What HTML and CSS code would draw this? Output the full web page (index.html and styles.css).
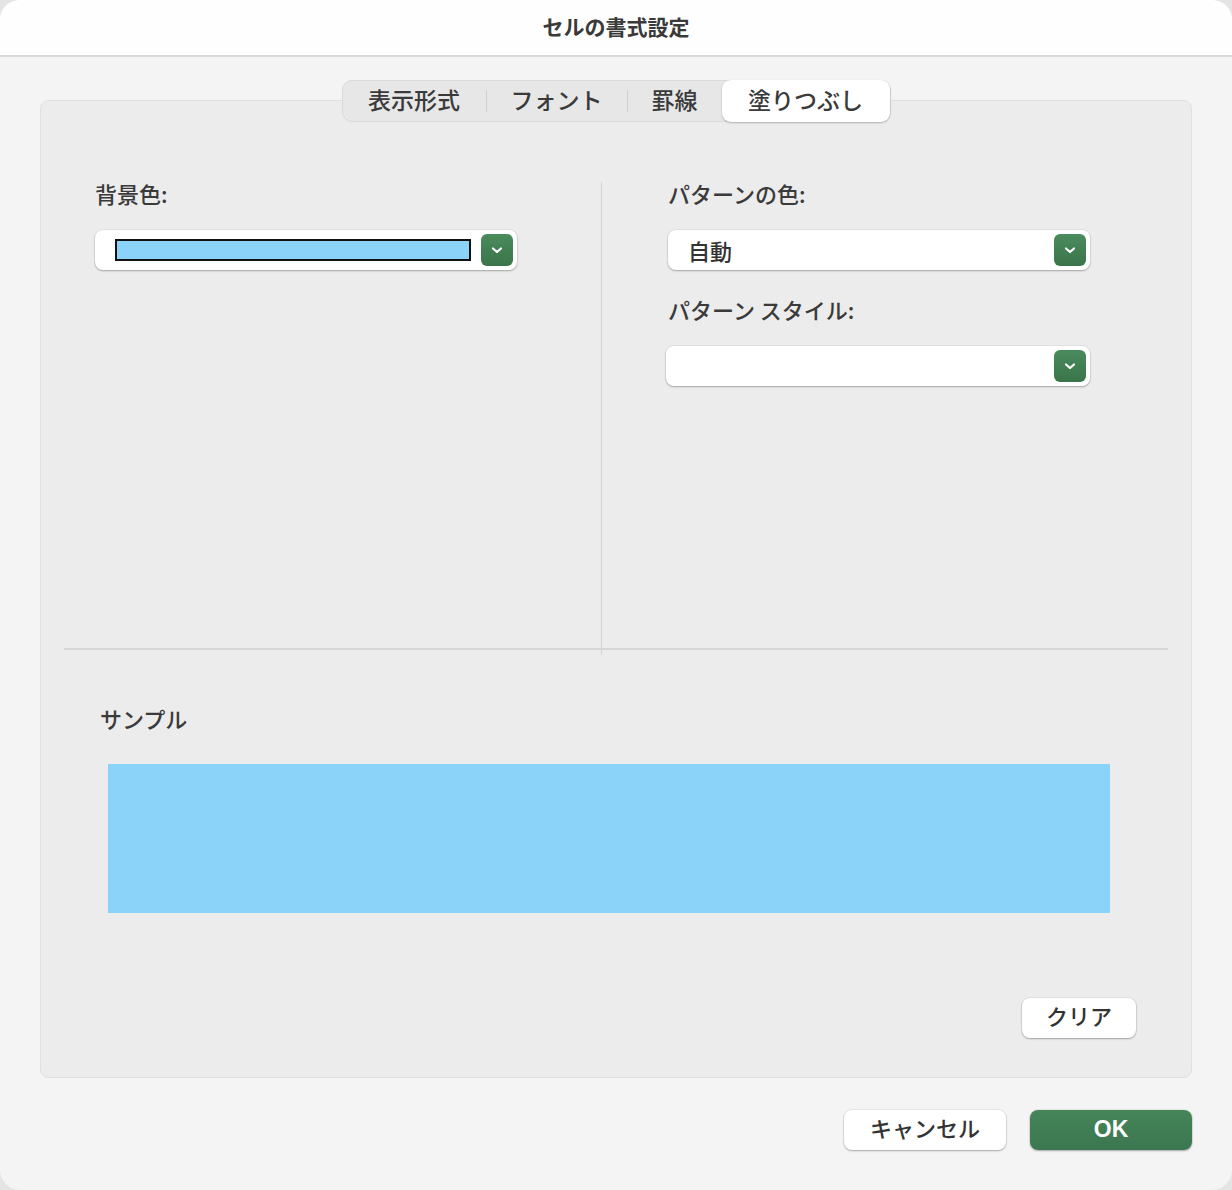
FILE: index.html
```html
<!DOCTYPE html>
<html lang="ja">
<head>
<meta charset="utf-8">
<title>セルの書式設定</title>
<link rel="stylesheet" href="styles.css">
</head>
<body>
<div class="window">
  <div class="titlebar">セルの書式設定</div>
  <div class="main">
    <div class="tabs-row">
      <div class="tabs">
        <div class="tab">表示形式</div>
        <div class="sep"></div>
        <div class="tab">フォント</div>
        <div class="sep"></div>
        <div class="tab">罫線</div>
        <div class="tab selected">塗りつぶし</div>
      </div>
    </div>
    <div class="panel">
      <div class="top">
        <div class="col left">
          <div class="label">背景色:</div>
          <div class="dropdown">
            <div class="swatch"></div>
            <div class="arrow"><svg width="16" height="16" viewBox="0 0 16 16"><polyline points="4,6.5 8,10 12,6.5" fill="none" stroke="#fff" stroke-width="2.2" stroke-linecap="round" stroke-linejoin="round"/></svg></div>
          </div>
        </div>
        <div class="col right">
          <div class="label">パターンの色:</div>
          <div class="dropdown">
            <div class="value">自動</div>
            <div class="arrow"><svg width="16" height="16" viewBox="0 0 16 16"><polyline points="4,6.5 8,10 12,6.5" fill="none" stroke="#fff" stroke-width="2.2" stroke-linecap="round" stroke-linejoin="round"/></svg></div>
          </div>
          <div class="label label2">パターン スタイル:</div>
          <div class="dropdown dd2">
            <div class="value"></div>
            <div class="arrow"><svg width="16" height="16" viewBox="0 0 16 16"><polyline points="4,6.5 8,10 12,6.5" fill="none" stroke="#fff" stroke-width="2.2" stroke-linecap="round" stroke-linejoin="round"/></svg></div>
          </div>
        </div>
      </div>
      <div class="hr"></div>
      <div class="sample-section">
        <div class="label sample-label">サンプル</div>
        <div class="sample"></div>
        <div class="clear-row"><button class="btn clear">クリア</button></div>
      </div>
    </div>
    <div class="footer">
      <button class="btn cancel">キャンセル</button>
      <button class="btn ok">OK</button>
    </div>
  </div>
</div>
</body>
</html>
```
FILE: styles.css
```css
* { box-sizing: border-box; }
html, body { margin: 0; padding: 0; }
body {
  background: #e4e4e4;
  font-family: "Noto Sans CJK JP", "Noto Sans", sans-serif;
  color: #3b3b3b;
}
.window {
  width: 1232px;
  height: 1190px;
  background: #f4f4f4;
  border-radius: 20px;
  overflow: hidden;
}
.titlebar {
  height: 57px;
  background: #fefefe;
  border-bottom: 2px solid #d9d9d9;
  display: flex;
  align-items: center;
  justify-content: center;
  font-size: 21px;
  font-weight: 700;
  color: #3a3a3a;
  padding-bottom: 4px;
}
.main {
  padding: 0 40px;
}
.tabs-row {
  display: flex;
  justify-content: center;
  margin-top: 23px;
  position: relative;
  z-index: 2;
  height: 42px;
}
.tabs {
  display: flex;
  align-items: center;
  background: #e7e7e7;
  border: 1px solid #dadada;
  border-radius: 10px;
  height: 42px;
}
.tab {
  padding: 0 24px 3px;
  font-size: 23px;
  font-weight: 500;
  line-height: 37px;
  height: 40px;
  color: #3a3a3a;
}
.tab:first-child { width: 143px; text-align: center; padding: 0 0 3px; }
.tab.selected {
  background: #fff;
  border-radius: 9px;
  box-shadow: 0 1px 2px rgba(0,0,0,0.25);
  width: 168px;
  padding: 0 0 3px;
  text-align: center;
  height: 42px;
  line-height: 39px;
}
.sep {
  width: 1px;
  height: 22px;
  background: #cfcfcf;
}
.panel {
  margin-top: -22px;
  height: 978px;
  background: #ececec;
  border: 1px solid #e0e0e0;
  border-radius: 8px;
  padding: 0 23px;
}
.top {
  display: grid;
  grid-template-columns: 537px 1fr;
  padding-top: 81px;
}
.col { height: 473px; }
.left { padding-left: 31px; }
.right {
  border-left: 1px solid #d4d4d4;
  padding-left: 66px;
}
.label {
  font-size: 22px;
  font-weight: 500;
  line-height: 22px;
  padding-bottom: 4px;
  color: #3a3a3a;
}
.dropdown {
  margin-top: 22px;
  width: 422px;
  height: 40px;
  background: #fff;
  border-radius: 8px;
  box-shadow: 0 0 0 1px rgba(0,0,0,0.04), 0 1px 2px rgba(0,0,0,0.28);
  display: flex;
  align-items: center;
  padding: 0 4px 0 20px;
}
.swatch {
  width: 356px;
  height: 22px;
  background: #8cd3f9;
  border: 2px solid #111;
  margin-right: 10px;
}
.value {
  flex: 1;
  font-size: 22px;
  font-weight: 500;
  color: #333;
}
.arrow {
  margin-left: auto;
  width: 32px;
  height: 32px;
  border-radius: 6px;
  background: linear-gradient(#4a8b5d, #3a7549);
  display: flex;
  align-items: center;
  justify-content: center;
}
.label2 { margin-top: 28px; }
.dd2 { width: 424px; margin-left: -2px; }
.hr {
  height: 2px;
  background: #d6d6d6;
  margin-top: -7px;
}
.sample-section {
  padding: 57px 0 0 36px;
}
.sample {
  margin-top: 31px;
  margin-left: 8px;
  width: 1002px;
  height: 149px;
  background: #8cd3f9;
}
.clear-row {
  display: flex;
  justify-content: flex-end;
  padding-right: 32px;
  margin-top: 85px;
}
.btn {
  font-family: "Noto Sans CJK JP", "Noto Sans", sans-serif;
  font-size: 22px;
  font-weight: 500;
  color: #333;
  background: #fff;
  border: none;
  border-radius: 8px;
  box-shadow: 0 0 0 1px rgba(0,0,0,0.05), 0 1px 2px rgba(0,0,0,0.28);
  height: 40px;
  padding: 0 0 5px;
  line-height: 35px;
}
.clear { width: 114px; }
.footer {
  display: flex;
  justify-content: flex-end;
  gap: 24px;
  margin-top: 32px;
}
.cancel { width: 162px; }
.ok {
  width: 162px;
  background: linear-gradient(#468559, #3b7650);
  color: #fff;
  font-family: "Liberation Sans", "Noto Sans", sans-serif;
  font-size: 23px;
  font-weight: 700;
  padding: 0 0 2px;
  line-height: 38px;
}
```
